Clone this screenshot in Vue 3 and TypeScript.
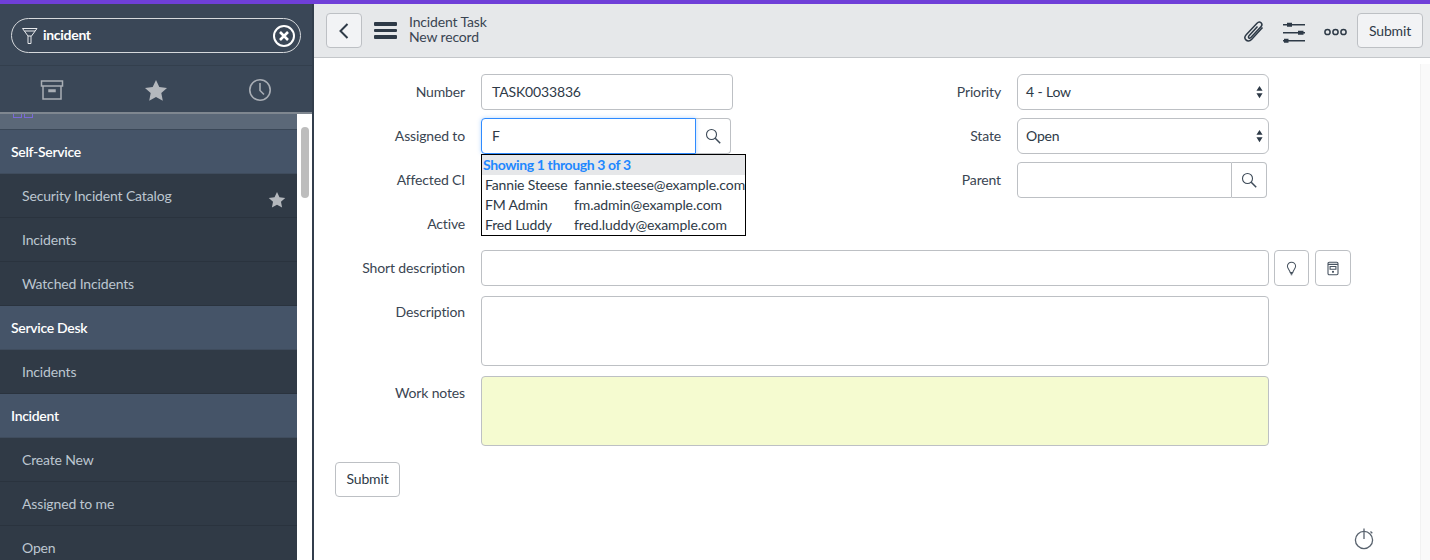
<script setup lang="ts">
interface NavRow { label: string; kind: 'head' | 'item'; star?: boolean }
const nav: NavRow[] = [
  { label: 'Self-Service', kind: 'head' },
  { label: 'Security Incident Catalog', kind: 'item', star: true },
  { label: 'Incidents', kind: 'item' },
  { label: 'Watched Incidents', kind: 'item' },
  { label: 'Service Desk', kind: 'head' },
  { label: 'Incidents', kind: 'item' },
  { label: 'Incident', kind: 'head' },
  { label: 'Create New', kind: 'item' },
  { label: 'Assigned to me', kind: 'item' },
  { label: 'Open', kind: 'item' },
]
const results = [
  ['Fannie Steese', 'fannie.steese@example.com'],
  ['FM Admin', 'fm.admin@example.com'],
  ['Fred Luddy', 'fred.luddy@example.com'],
]
</script>

<template>
  <div class="page">
    <aside class="side">
      <div class="search-wrap">
        <div class="search">
          <svg class="ico-filter" width="18" height="18" viewBox="0 0 18 18" fill="none" stroke="#e8eaed" stroke-width="1"><path d="M1.500 1.500h14.500M1.500 1.500l5.500 7.500h3.500l5.500-7.500M3.500 4h10.500M7 9v7.500h3v-7.500"/></svg>
          <span class="search-text">incident</span>
          <svg class="ico-x" width="24" height="24" viewBox="0 0 24 24" fill="none" stroke="#fff" stroke-width="2"><circle cx="12" cy="12" r="10"/><path d="M8 8l8 8M16 8l-8 8" stroke-width="2.600"/></svg>
        </div>
      </div>
      <div class="tabs">
        <svg width="24" height="22" viewBox="0 0 24 22" fill="none" stroke="#a9aeb5" stroke-width="1.500"><path d="M1.500 2h21v5h-21zM3 7v13h18v-13M9 11h6v1.500h-6z"/></svg>
        <svg width="24" height="22" viewBox="0 0 24 22" fill="#b4b8bd"><path d="M12 1l3.300 7 7.700.9-5.700 5.200 1.500 7.600-6.800-3.800-6.800 3.800 1.500-7.600-5.700-5.200 7.700-.9z"/></svg>
        <svg width="24" height="24" viewBox="0 0 24 24" fill="none" stroke="#a9aeb5" stroke-width="1.600"><circle cx="12" cy="12" r="10.200"/><path d="M12 5v7.500l4 4"/></svg>
      </div>
      <div class="nav-wrap">
        <div class="nav">
          <div class="cut">
            <span class="cut-ico"></span>
          </div>
          <div v-for="(r, i) in nav" :key="i" class="row" :class="r.kind">
            <span>{{ r.label }}</span>
            <svg v-if="r.star" class="row-star" width="18" height="17" viewBox="0 0 24 22" fill="#b4b8bd"><path d="M12 1l3.300 7 7.700.9-5.700 5.200 1.500 7.600-6.800-3.800-6.800 3.800 1.500-7.600-5.700-5.200 7.700-.9z"/></svg>
          </div>
        </div>
        <div class="track"><div class="thumb"></div></div>
      </div>
    </aside>

    <main class="main">
      <header class="bar">
        <button class="btn back">
          <svg width="12" height="18" viewBox="0 0 12 18" fill="none" stroke="#2e3a47" stroke-width="2"><path d="M9.500 2l-7 7 7 7"/></svg>
        </button>
        <div class="burger"><i></i><i></i><i></i></div>
        <div class="title"><div>Incident Task</div><div>New record</div></div>
        <div class="spacer"></div>
        <svg class="bar-ico clip" width="24" height="24" viewBox="0 0 24 24" fill="none" stroke="#2e3a47" stroke-width="1.500"><path d="M20.500 8.500l-11 12c-1.800 1.900-4.300 1.700-5.600.4-1.400-1.400-1.200-3.500.3-5.100l10.800-11.600c1.300-1.400 3-1.400 4.100-.4 1.100 1.100 1 2.700-.2 4l-10 10.800c-.7.800-1.600.8-2.100.3-.6-.6-.5-1.400.2-2.200l8.500-9.200"/></svg>
        <svg class="bar-ico sliders" width="22" height="22" viewBox="0 0 22 22" fill="#2e3a47"><path d="M0 3h22v1.400h-22zM0 11h22v1.400h-22zM0 19h22v1.400h-22z"/><path d="M4 1.700h5v4h-5zM15 9.700h5.500v4h-5.500zM1 17.700h4.500v4h-4.500z"/></svg>
        <svg class="bar-ico dots" width="23" height="8" viewBox="0 0 23 8" fill="none" stroke="#2e3a47" stroke-width="1.500"><circle cx="3.500" cy="4" r="2.600"/><circle cx="11.500" cy="4" r="2.600"/><circle cx="19.500" cy="4" r="2.600"/></svg>
        <button class="btn submit-top">Submit</button>
      </header>

      <div class="content">
        <div class="form">
          <div class="cols">
            <div class="col">
              <div class="fr">
                <label>Number</label>
                <div class="input">TASK0033836</div>
              </div>
              <div class="fr">
                <label>Assigned to</label>
                <div class="group assign">
                  <div class="input focus">F</div>
                  <div class="addon">
                    <svg width="16" height="16" viewBox="0 0 16 16" fill="none" stroke="#3d4a58" stroke-width="1.100"><circle cx="6.500" cy="6.500" r="5"/><path d="M10.200 10.200l5 5" stroke-width="1.500"/></svg>
                  </div>
                  <div class="ac">
                    <div class="ac-head">Showing 1 through 3 of 3</div>
                    <div v-for="r in results" :key="r[1]" class="ac-row">
                      <span class="ac-name">{{ r[0] }}</span><span>{{ r[1] }}</span>
                    </div>
                  </div>
                </div>
              </div>
              <div class="fr"><label>Affected CI</label></div>
              <div class="fr"><label>Active</label></div>
            </div>
            <div class="col">
              <div class="fr">
                <label>Priority</label>
                <div class="select">4 - Low<svg class="arrows" width="7" height="14" viewBox="0 0 8 14" fill="#2e3a47"><path d="M4 0l3.500 5.500h-7zM4 14l-3.500-5.500h7z"/></svg></div>
              </div>
              <div class="fr">
                <label>State</label>
                <div class="select">Open<svg class="arrows" width="7" height="14" viewBox="0 0 8 14" fill="#2e3a47"><path d="M4 0l3.500 5.500h-7zM4 14l-3.500-5.500h7z"/></svg></div>
              </div>
              <div class="fr">
                <label>Parent</label>
                <div class="group parent">
                  <div class="input flat"></div>
                  <div class="addon">
                    <svg width="16" height="16" viewBox="0 0 16 16" fill="none" stroke="#3d4a58" stroke-width="1.100"><circle cx="6.500" cy="6.500" r="5"/><path d="M10.200 10.200l5 5" stroke-width="1.500"/></svg>
                  </div>
                </div>
              </div>
            </div>
          </div>

          <div class="fr short">
            <label>Short description</label>
            <div class="input wide"></div>
            <button class="btn square bulb">
              <svg width="11" height="15" viewBox="0 0 14 18" fill="none" stroke="#46525f" stroke-width="1.300"><path d="M7 1a5.200 5.200 0 0 0-5.200 5.200c0 2.800 3 4.800 3.600 8h3.200c.6-3.200 3.600-5.200 3.600-8a5.200 5.200 0 0 0-5.200-5.200z"/><path d="M5.500 15.500h3M6 17h2"/></svg>
            </button>
            <button class="btn square tpl">
              <svg width="12" height="15" viewBox="0 0 14 18" fill="none" stroke="#46525f" stroke-width="1.300"><rect x="1" y="1.500" width="12" height="15" rx="1.500"/><path d="M1 4h12M3.500 6.500h7v3.500h-7z"/><circle cx="7" cy="13" r=".6" fill="#46525f"/></svg>
            </button>
          </div>
          <div class="fr tall">
            <label>Description</label>
            <div class="input area"></div>
          </div>
          <div class="fr tall notes">
            <label>Work notes</label>
            <div class="input area yellow"></div>
          </div>
          <button class="btn submit-bottom">Submit</button>
        </div>
        <aside class="rail"></aside>
        <svg class="timer" width="20" height="23" viewBox="0 0 20 23" fill="none" stroke="#59636e" stroke-width="1.300"><circle cx="10" cy="13" r="8.600"/><path d="M10 1.500v10.500M16.500 4.500l1.800 1.800"/></svg>
      </div>
    </main>
  </div>
</template>

<style>
html, body { margin: 0; background: #fff; overflow: hidden; }
</style>

<style scoped>
.page {
  display: flex;
  width: 1430px;
  height: 560px;
  border-top: 4px solid #6f3fd8;
  box-sizing: border-box;
  overflow: hidden;
  font-family: "Lato", "Noto Sans", sans-serif;
  font-size: 14px;
  letter-spacing: -0.15px;
  color: #2e3a47;
}
.side {
  width: 314px;
  flex: none;
  background: #3a4757;
  box-sizing: border-box;
  border-right: 2px solid #323e4c;
  display: flex;
  flex-direction: column;
  height: 556px;
}
.search-wrap { height: 62px; padding: 14px 11px 0; box-sizing: border-box; border-bottom: 1px solid #333f4d; }
.search {
  height: 35px;
  width: 290px;
  box-sizing: border-box;
  border: 1px solid #d6d9dc;
  border-radius: 18px;
  display: flex;
  align-items: center;
  padding: 0 4px 0 9px;
  color: #fff;
}
.search-text { margin-left: 4px; padding-bottom: 2px; font-weight: 700; flex: 1; letter-spacing: -0.3px; }
.tabs {
  height: 48px;
  display: flex;
  align-items: center;
  justify-content: space-between;
  padding: 2px 40px 0;
  box-sizing: border-box;
  border-bottom: 2px solid #7f8790;
}
.nav-wrap { flex: 1; display: flex; min-height: 0; overflow: hidden; background: #fff; }
.nav { width: 297px; flex: none; }
.cut { height: 16px; background: #5b6878; border-bottom: 1px solid #3a4757; box-sizing: border-box; position: relative; overflow: hidden; }
.cut-ico { position: absolute; left: 13px; top: -6px; width: 7px; height: 8px; border: 1px solid #7a6ad8; box-shadow: 11px 0 0 -1px #5b6878, 11px 0 0 0 #7a6ad8; }
.row {
  height: 44px;
  display: flex;
  align-items: center;
  box-sizing: border-box;
  justify-content: space-between;
  border-bottom: 1px solid #2a333e;
}
.row.head { padding-left: 11px; background: #455468; color: #fff; font-weight: 600; border-bottom-color: #3f4c5d; letter-spacing: -0.3px; }
.row.item { padding-left: 22px; padding-right: 11px; background: #303a46; color: #bcc6d0; }
.row-star { margin-top: 7px; }
.track { flex: 1; position: relative; }
.thumb { position: absolute; left: 4px; top: 13px; width: 8px; height: 71px; border-radius: 4px; background: #bdbdbd; }

.main { flex: 1; min-width: 0; display: flex; flex-direction: column; }
.bar {
  height: 54px;
  flex: none;
  box-sizing: border-box;
  background: #e6e8ea;
  border-bottom: 1px solid #c4c7ca;
  display: flex;
  align-items: center;
  padding: 0 7px 0 12px;
}
.btn {
  font: inherit;
  letter-spacing: inherit;
  color: inherit;
  background: #fff;
  border: 1px solid #bdc0c4;
  border-radius: 4px;
  box-sizing: border-box;
  padding: 0;
  display: flex;
  align-items: center;
  justify-content: center;
}
.back { width: 36px; height: 35px; background: #f2f3f5; }
.burger { margin-left: 12px; width: 23px; display: flex; flex-direction: column; gap: 3px; }
.burger i { display: block; height: 3.500px; background: #2e3a47; border-radius: 1px; }
.title { margin: 0 0 4px 12px; line-height: 15px; color: #3a4552; }
.spacer { flex: 1; }
.bar-ico { flex: none; }
.clip { margin-right: 17px; }
.sliders { margin: 2px 19px 0 0; }
.dots { margin: 2px 10px 0 0; }
.submit-top { width: 66px; height: 35px; background: #f2f3f5; }

.content { flex: 1; position: relative; display: flex; min-height: 0; }
.form { width: 1106px; flex: none; padding-top: 16px; box-sizing: border-box; }
.rail { flex: 1; background: #fafafa; margin-top: 6px; border-left: 1px solid #f2f2f2; }
.cols { display: flex; }
.col { width: 536px; flex: none; display: flex; flex-direction: column; gap: 8px; }
.fr { display: flex; align-items: center; height: 36px; }
.fr label { width: 151px; flex: none; text-align: right; margin-right: 16px; padding-bottom: 2px; color: #3a4552; }
.input {
  width: 252px;
  height: 36px;
  box-sizing: border-box;
  border: 1px solid #bdc0c4;
  border-radius: 4px;
  background: #fff;
  padding: 0 10px 2px;
  display: flex;
  align-items: center;
}
.select {
  width: 252px;
  height: 36px;
  box-sizing: border-box;
  border: 1px solid #bdc0c4;
  border-radius: 6px;
  background: #fff;
  padding: 0 8px 2px;
  display: flex;
  align-items: center;
  justify-content: space-between;
}
.arrows { margin: 2px -3px 0 0; }
.group { display: flex; position: relative; height: 36px; }
.addon {
  width: 35px;
  box-sizing: border-box;
  border: 1px solid #bdc0c4;
  border-left: 0;
  border-radius: 0 4px 4px 0;
  display: flex;
  align-items: center;
  justify-content: center;
}
.focus { width: 215px; border-color: #2f8bff; border-radius: 4px 0 0 4px; box-shadow: 0 0 4px rgba(47, 139, 255, 0.35); }
.flat { width: 215px; border-radius: 4px 0 0 4px; }
.ac {
  position: absolute;
  left: 0;
  top: 36px;
  width: 265px;
  box-sizing: border-box;
  height: 82px;
  border: 1px solid #000;
  background: #fff;
  z-index: 3;
  line-height: 20px;
}
.ac-head { background: #e6e7e9; color: #1f87ff; font-weight: 700; padding-left: 1px; letter-spacing: -0.38px; }
.ac-row { padding-left: 3px; white-space: nowrap; display: flex; letter-spacing: -0.08px; }
.ac-name { width: 89px; flex: none; letter-spacing: -0.15px; }
.short { margin-top: 8px; }
.wide { width: 788px; }
.square { width: 35px; height: 36px; }
.bulb { margin-left: 5px; }
.tpl { margin-left: 6px; width: 36px; }
.tall { height: 70px; margin-top: 10px; align-items: flex-start; }
.tall label { margin-top: 7px; }
.notes label { margin-top: 8px; }
.area { width: 788px; height: 70px; }
.yellow { background: #f5fbd0; }
.submit-bottom { width: 65px; height: 35px; margin: 16px 0 0 21px; padding-bottom: 2px; }
.timer { position: absolute; left: 1040px; top: 469px; }
</style>
